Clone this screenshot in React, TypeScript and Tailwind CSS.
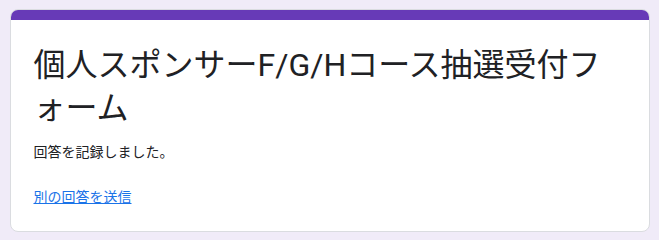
import React from 'react'

const App = () => {
  return (
    <div className="min-h-[240px] w-full bg-[#f0ebf8] pt-[9px] pb-[9px] font-['Roboto','Noto_Sans_CJK_JP',sans-serif] text-[#202124]">
      <div className="mx-auto w-[640px] overflow-hidden rounded-lg border border-[#dadce0] bg-white">
        <div className="h-[10px] bg-[#673ab7]" />
        <div className="px-[23px] pt-[24px] pb-[24px]">
          <h1 className="text-[32px] leading-[1.35] font-normal">
            個人スポンサーF/G/Hコース抽選受付フォーム
          </h1>
          <p className="mt-[12px] text-[14px] leading-[20px]">回答を記録しました。</p>
          <a href="#" className="mt-[25px] block w-fit text-[14px] leading-[20px] text-[#1a73e8] underline">
            別の回答を送信
          </a>
        </div>
      </div>
    </div>
  )
}

export default App
